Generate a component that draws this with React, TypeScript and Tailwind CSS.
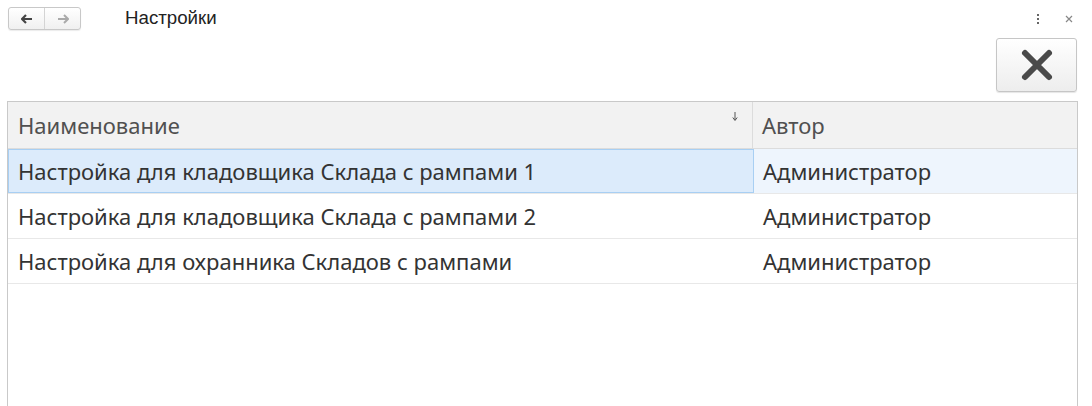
import React from 'react';

const rows = [
  { name: 'Настройка для кладовщика Склада с рампами 1', author: 'Администратор' },
  { name: 'Настройка для кладовщика Склада с рампами 2', author: 'Администратор' },
  { name: 'Настройка для охранника Складов с рампами', author: 'Администратор' },
];

export default function App() {
  return (
    <div className="w-[1092px] h-[406px] bg-white overflow-hidden relative" style={{ fontFamily: '"Noto Sans", "Open Sans", sans-serif' }}>
      {/* Title bar */}
      <div className="flex items-center h-[37px] pl-[8px] pr-[19px]">
        <div className="flex h-[23px] w-[73px] border border-[#c8c8c8] rounded-[3px] bg-gradient-to-b from-white to-[#f0f0f0] shadow-[0_1px_1px_rgba(0,0,0,0.08)]">
          <div className="flex-1 flex items-center justify-center border-r border-[#d4d4d4]">
            <svg width="12" height="10" viewBox="0 0 12 10">
              <path d="M5 1 L1 5 L5 9 M1 5 H11" stroke="#444" strokeWidth="2.2" fill="none" />
            </svg>
          </div>
          <div className="flex-1 flex items-center justify-center">
            <svg width="12" height="10" viewBox="0 0 12 10">
              <path d="M7 1 L11 5 L7 9 M1 5 H11" stroke="#aaa" strokeWidth="2" fill="none" />
            </svg>
          </div>
        </div>
        <span className="ml-[44px] text-[18.7px] text-[#222]" style={{ fontFamily: '"Liberation Sans", Arial, sans-serif' }}>Настройки</span>
        <div className="flex-1" />
        <div className="flex flex-col gap-[2px] items-center mr-[26px]">
          <span className="w-[2px] h-[2px] bg-[#666]" />
          <span className="w-[2px] h-[2px] bg-[#666]" />
          <span className="w-[2px] h-[2px] bg-[#666]" />
        </div>
        <svg width="8" height="8" viewBox="0 0 8 8">
          <path d="M1 1 L7 7 M7 1 L1 7" stroke="#888" strokeWidth="1.2" />
        </svg>
      </div>

      {/* Command bar */}
      <div className="flex justify-end pr-[15px] mt-[1px]">
        <button className="w-[81px] h-[54px] border border-[#c6c6c6] rounded-[3px] bg-gradient-to-b from-white to-[#ededed] flex items-center justify-center shadow-[0_1px_1px_rgba(0,0,0,0.1)]">
          <svg width="34" height="34" viewBox="0 0 34 34">
            <path d="M5 5 L29 29 M29 5 L5 29" stroke="#4a4a4a" strokeWidth="6" strokeLinecap="round" />
          </svg>
        </button>
      </div>

      {/* Table */}
      <div className="ml-[7px] mr-[14px] mt-[9px] border border-[#c9c9c9] border-b-0 h-[320px]">
        <div className="flex h-[47px] bg-[#f2f2f2] border-b border-[#dcdcdc] text-[22px] text-[#505050]">
          <div className="w-[745px] flex items-center pl-[10px] border-r border-[#dcdcdc] relative">
            Наименование
            <svg className="absolute right-[14px] top-[10px]" width="6" height="10" viewBox="0 0 6 10">
              <path d="M3 0 V8 M0.8 5.5 L3 8.5 L5.2 5.5" stroke="#555" strokeWidth="1" fill="none" />
            </svg>
          </div>
          <div className="flex-1 flex items-center pl-[9px]">Автор</div>
        </div>
        {rows.map((r, i) => (
          <div key={i} className={`flex h-[45px] border-b border-[#e8e8e8] text-[22px] text-[#333] ${i === 0 ? 'bg-[#eef5fd]' : ''}`}>
            <div className={`w-[746px] flex items-center pl-[10px] ${i === 0 ? 'bg-[#dcebfb] shadow-[inset_0_0_0_1px_#a8cff3]' : ''}`}>{r.name}</div>
            <div className="flex-1 flex items-center pl-[9px]">{r.author}</div>
          </div>
        ))}
      </div>
    </div>
  );
}
